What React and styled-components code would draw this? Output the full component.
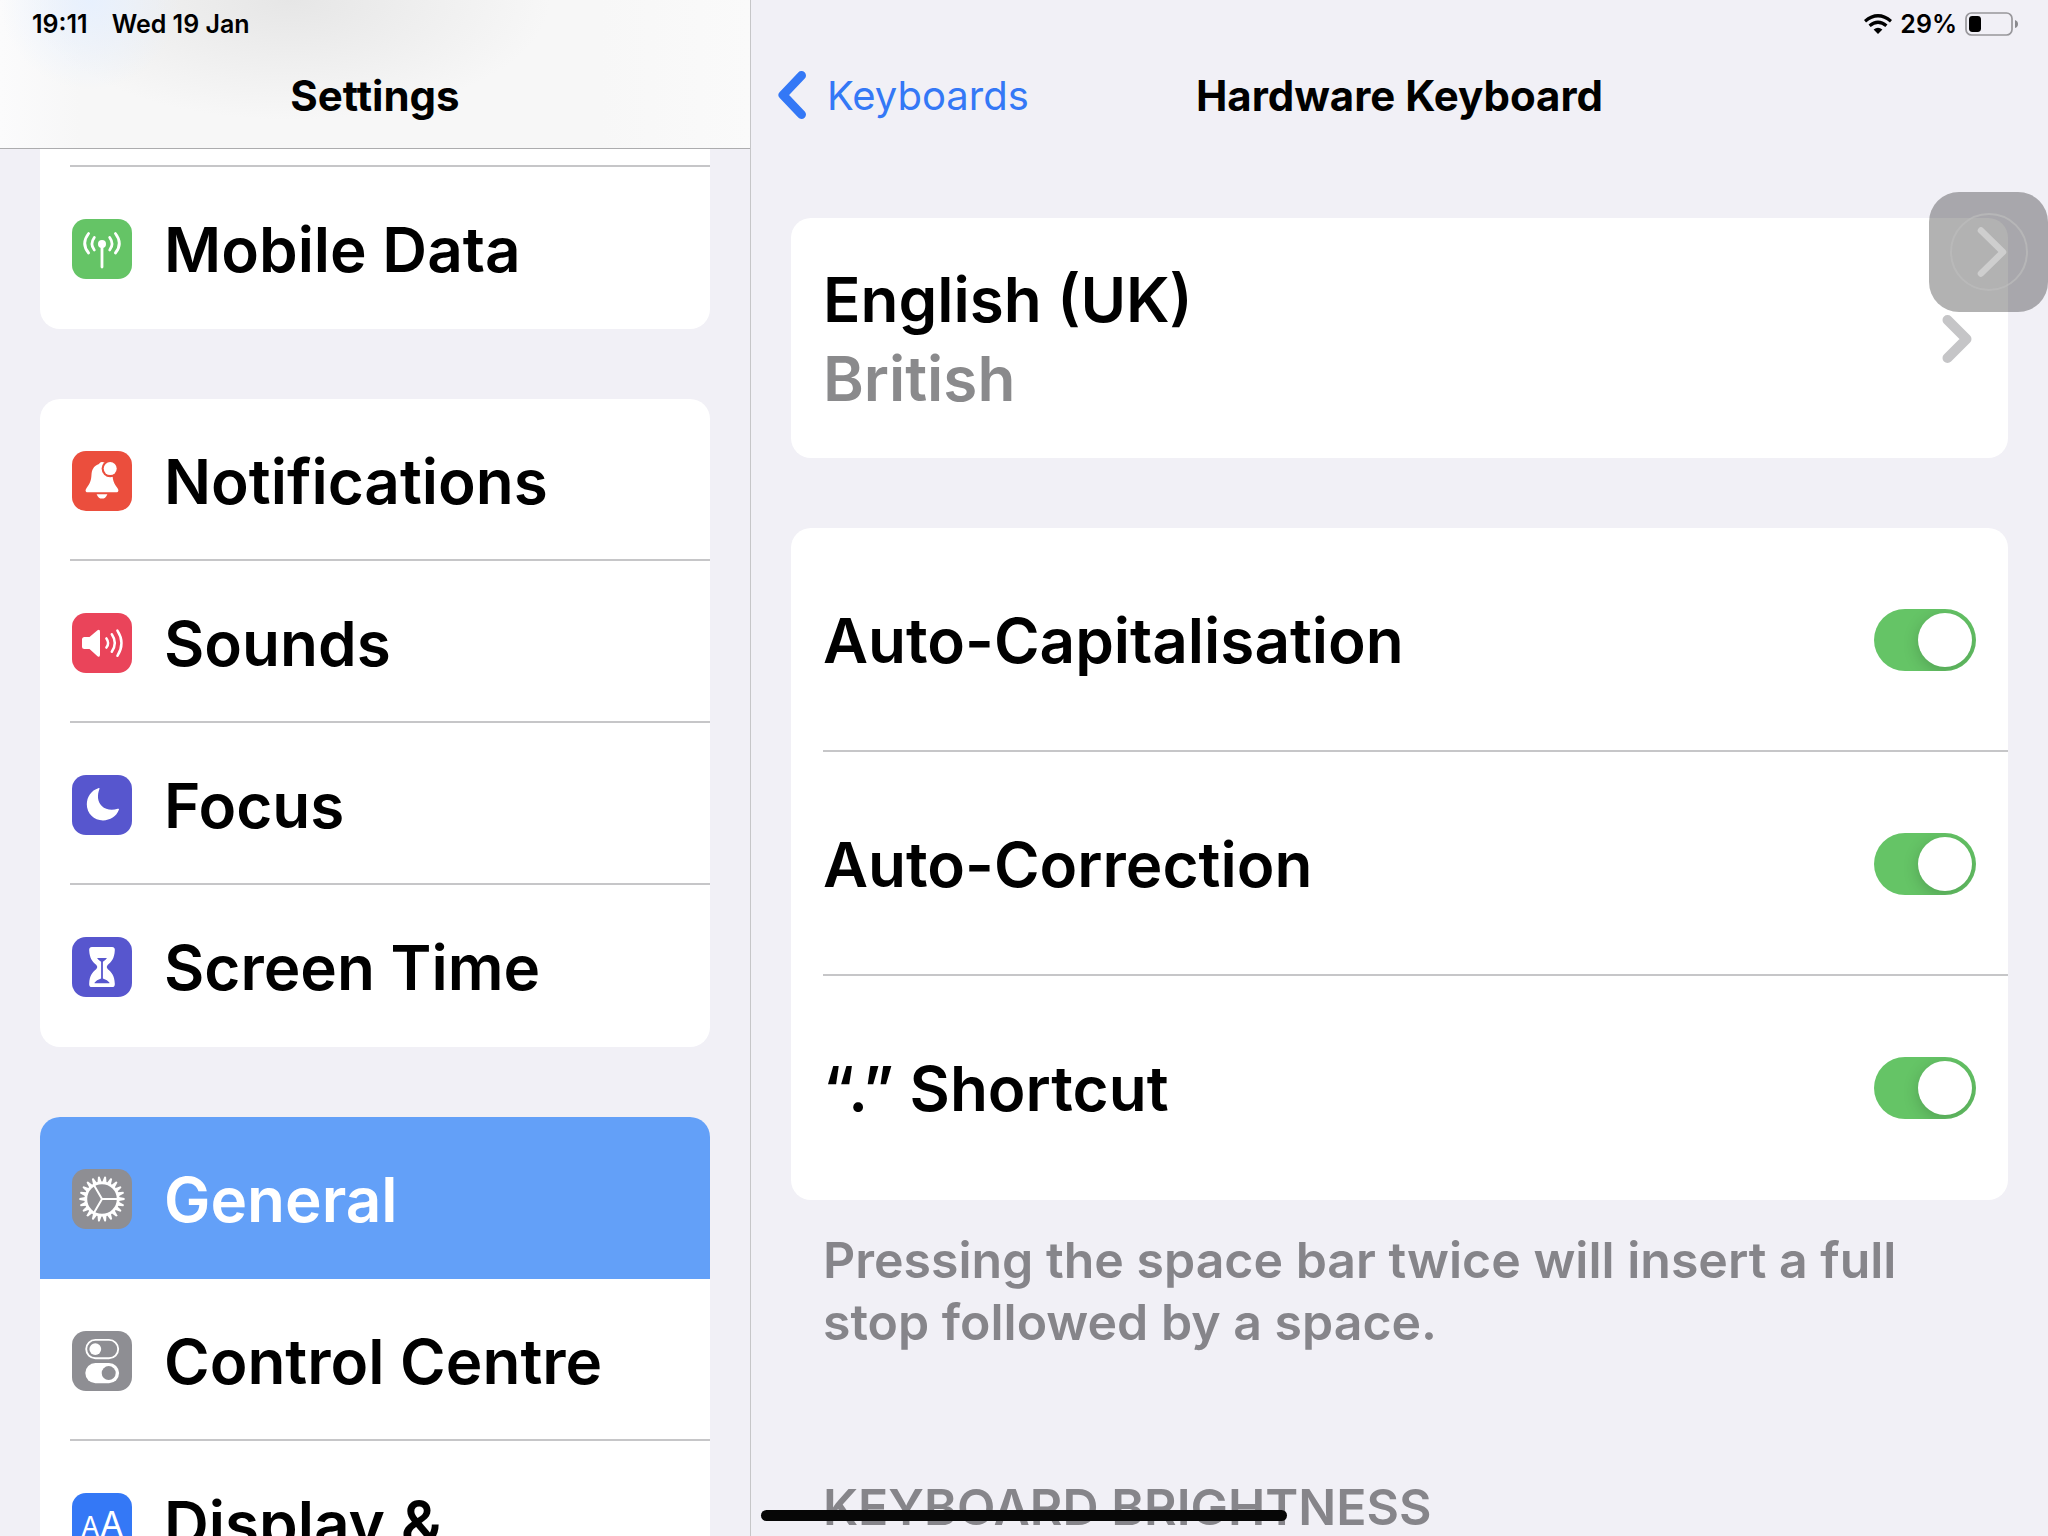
import React, { useState } from 'react'
import styled, { createGlobalStyle, ThemeProvider } from 'styled-components'

const theme = {
  font: '"Inter", "Liberation Sans", sans-serif',
  background: '#f1f0f6',
  card: '#ffffff',
  line: '#c6c6c8',
  text: '#000000',
  muted: '#86858a',
  blue: '#3478f6',
  selected: '#63a0f8',
  green: '#65c466',
}

const GlobalStyle = createGlobalStyle`
  * { box-sizing: border-box; }
  body { margin: 0; overflow: hidden; }
  h1, h2, p, ul { margin: 0; padding: 0; font: inherit; }
  ul { list-style: none; }
  button { border: 0; padding: 0; background: none; font: inherit; color: inherit; cursor: pointer; }
`

const Screen = styled.div`
  position: relative;
  display: grid;
  grid-template-columns: 11fr 19fr;
  height: 100vh;
  overflow: hidden;
  background: ${ ({ theme }) => theme.background };
  color: ${ ({ theme }) => theme.text };
  font-family: ${ ({ theme }) => theme.font };
  font-size: 62px;
  font-weight: 600;
`

const Sidebar = styled.nav`
  min-width: 0;
  overflow: hidden;
  border-right: 1px solid ${ ({ theme }) => theme.line };
`

const SidebarHeader = styled.header`
  height: 149px;
  border-bottom: 1px solid #acacae;
  background:
    radial-gradient(ellipse 90px 90px at 90px 0, rgba(230, 240, 255, 0.9) 0, rgba(230, 240, 255, 0) 100%),
    radial-gradient(ellipse 260px 120px at 290px 0, #e6e6e6 0, rgba(230, 230, 230, 0) 100%),
    linear-gradient(to right, #fbfbfc 0, #f7f7f7 80px, #f7f7f7 600px, #fafafa 100%);
`

const StatusBar = styled.div`
  display: flex;
  align-items: center;
  justify-content: ${ props => props.$end ? 'flex-end' : 'flex-start' };
  gap: ${ props => props.$end ? '8px' : '24px' };
  height: 48px;
  padding: 0 30px 0 32px;
  font-size: 25px;
`

const TitleBar = styled.div`
  display: grid;
  grid-template-columns: 1fr auto 1fr;
  align-items: center;
  height: 94px;
  padding: 0 26px;
  font-size: 40px;
`

const Title = styled.h1`
  grid-column: 2;
  font-size: 42px;
  font-weight: 700;
`

const BackLink = styled.a`
  display: flex;
  align-items: center;
  gap: 20px;
  color: ${ ({ theme }) => theme.blue };
  font-weight: 400;
  text-decoration: none;
`

const SidebarList = styled.div`
  display: flex;
  flex-direction: column;
  gap: 70px;
  padding: 0 40px;
`

const Card = styled.ul`
  overflow: hidden;
  border-radius: ${ props => props.$cut ? '0 0 20px 20px' : '20px' };
  background: ${ ({ theme }) => theme.card };
`

const NavItem = styled.li`
  padding-left: 30px;
  background: ${ ({ theme, $selected }) => $selected ? theme.selected : 'transparent' };
  color: ${ ({ theme, $selected }) => $selected ? theme.card : 'inherit' };
`

const NavButton = styled.button`
  display: flex;
  align-items: center;
  gap: 32px;
  width: 100%;
  height: 162px;
  padding: 2px 0 0 2px;
  text-align: left;
  white-space: nowrap;
  ${ props => props.$line ? `border-bottom: 2px solid ${ props.theme.line }; padding-top: 4px;` : '' }
`

const CutRow = styled.li`
  height: 18px;
  margin-left: 30px;
  border-bottom: 2px solid ${ ({ theme }) => theme.line };
`

const Tile = styled.svg`
  flex: none;
  width: 60px;
  height: 60px;
  border-radius: 14px;
  background: ${ props => props.$color };
`

const Main = styled.main`
  min-width: 0;
  overflow: hidden;
`

const MainHeader = styled.header`
  height: 148px;
`

const Content = styled.div`
  display: flex;
  flex-direction: column;
  gap: 70px;
  padding: 70px 40px 0;
`

const LayoutButton = styled.button`
  display: flex;
  align-items: center;
  justify-content: space-between;
  width: 100%;
  height: 240px;
  padding: 2px 36px 0 32px;
  line-height: 79px;
  text-align: left;
`

const LayoutName = styled.span`
  display: flex;
  flex-direction: column;
`

const Variant = styled.span`
  color: #8a8a8c;
`

const SwitchRow = styled.li`
  display: flex;
  align-items: center;
  justify-content: space-between;
  height: 224px;
  margin-left: 32px;
  padding: 2px 32px 0 0;
  &:last-child { padding-top: 0; }
  &:not(:last-child) { border-bottom: 2px solid ${ ({ theme }) => theme.line }; }
`

const Switch = styled.input`
  appearance: none;
  flex: none;
  display: flex;
  width: 102px;
  height: 62px;
  margin: 0;
  padding: 4px;
  overflow: hidden;
  border-radius: 31px;
  background: #e9e9ea;
  cursor: pointer;
  &::before {
    content: '';
    width: 54px;
    height: 54px;
    border-radius: 50%;
    background: #fff;
    box-shadow: 0 4px 16px rgba(0, 0, 0, 0.18);
  }
  &:checked {
    justify-content: flex-end;
    background: ${ ({ theme }) => theme.green };
  }
`

const Note = styled.p`
  padding: 29px 32px 0;
  color: ${ ({ theme }) => theme.muted };
  font-size: 50px;
  line-height: 62px;
`

const SectionTitle = styled.h2`
  padding: 53px 32px 0;
  color: ${ ({ theme }) => theme.muted };
  font-size: 50px;
  line-height: 62px;
  white-space: nowrap;
`

const AssistiveButton = styled.button`
  position: absolute;
  top: 192px;
  right: 0;
  width: 119px;
  height: 120px;
  border-radius: 30px;
  background: rgba(0, 0, 0, 0.3);
  svg { display: block; }
`

const HomeIndicator = styled.div`
  position: absolute;
  bottom: 15px;
  left: 50%;
  width: 526px;
  height: 11px;
  border-radius: 6px;
  background: #060606;
  transform: translateX(-50%);
`

const stroke = { fill: 'none', stroke: '#fff', strokeLinecap: 'round' }

const AntennaIcon = () => (
  <>
    <g {...stroke} strokeWidth="2.8">
      <path d="M30 26V48" />
      <path d="M22.3 18.5Q17.6 25 22.3 31M37.7 18.5Q42.4 25 37.7 31" />
      <path d="M16.6 14.5Q8.8 24.5 16.6 34M43.4 14.5Q51.2 24.5 43.4 34" />
    </g>
    <circle cx="30" cy="25" r="4" fill="#fff" />
  </>
)

const BellIcon = () => (
  <>
    <path fill="#fff" d="M30 11C28 11 28 12.6 26.5 13.2C21.5 15 19.8 19 19.5 23.5C19.1 30 18.2 32 14.6 37C12.8 39.6 13.6 41.3 15.5 41.3H44.5C46.4 41.3 47.2 39.6 45.4 37C41.8 32 40.9 30 40.5 23.5C40 17 36 11 30 11Z" />
    <path fill="#fff" d="M24.6 43.2H35.4C34 46.4 32.4 47.6 30 47.6C27.6 47.6 26 46.4 24.6 43.2Z" />
    <circle cx="38.2" cy="17.6" r="8.6" fill="#eb4e3d" />
    <circle cx="38.2" cy="17.6" r="6.5" fill="#fff" />
  </>
)

const SpeakerIcon = () => (
  <>
    <path fill="#fff" d="M12.5 24H17.5L25.5 17.3Q28 15.8 28 18.8V41.8Q28 44.8 25.5 43.2L17.5 36H12.5Q10 36 10 33.5V26.5Q10 24 12.5 24Z" />
    <g {...stroke} strokeWidth="2.5">
      <path d="M34.4 25.4Q37.8 30 34.4 34.6" />
      <path d="M39.8 21.3Q45.8 30 39.8 38.8" />
      <path d="M45.4 17.6Q53.6 30 45.4 42.8" />
    </g>
  </>
)

const MoonIcon = () => (
  <path fill="#fff" d="M26.8 13.1C18.8 15.6 14.8 22.4 14.8 29.3C14.8 38.6 22 45.4 31 45.4C38 45.4 44.6 41.4 46.9 34.8C47.2 33.8 46.6 33.5 45.8 33.8C39.8 35.8 33.6 34.8 29.8 31C25.6 26.8 25 20.6 27.4 14C27.7 13.3 27.4 12.9 26.8 13.1Z" />
)

const HourglassIcon = () => (
  <>
    <path fill="#fff" d="M20 10H40Q43.2 10 42.8 13.6C42.4 21.4 39.6 24.8 35.6 28Q33.8 30 35.6 32C39.6 35.2 42.4 38.6 42.8 46.4Q43.2 50 40 50H20Q16.8 50 17.2 46.4C17.6 38.6 20.4 35.2 24.4 32Q26.2 30 24.4 28C20.4 24.8 17.6 21.4 17.2 13.6Q16.8 10 20 10Z" />
    <path fill="#5756ce" d="M25 21H35Q33.4 23.4 30.9 24.8V41.6Q35.6 43 37.4 45.4V46.2H22.6V45.4Q24.4 43 29.1 41.6V24.8Q26.6 23.4 25 21Z" />
  </>
)

const TEETH = 22

const GearIcon = () => (
  <>
    <g fill="#fff">
      {
        Array.from({ length: TEETH }, (_, i) => (
          <path
            key={i}
            d="M46.8 27.9L52.4 29.1Q53.2 30 52.4 30.9L46.8 32.1Z"
            transform={`rotate(${ i * 360 / TEETH } 30 30)`} />
        ))
      }
    </g>
    <circle cx="30" cy="30" r="16.2" fill="none" stroke="#fff" strokeWidth="2.8" />
    <path {...stroke} strokeWidth="2" d="M30 30H46M30 30L22 16.2M30 30L22 43.8" />
  </>
)

const SwitchesIcon = () => (
  <>
    <rect x="14.2" y="8.9" width="32" height="18.4" rx="9.2" fill="none" stroke="#fff" strokeWidth="1.9" />
    <circle cx="23.3" cy="18.1" r="5.9" fill="#fff" />
    <rect x="13.3" y="32" width="33.8" height="20.2" rx="10.1" fill="#fff" />
    <circle cx="36.7" cy="42.1" r="7" fill="#8e8e93" />
  </>
)

const LettersIcon = () => (
  <g fill="#fff" fontWeight="400">
    <text x="9" y="43" fontSize="27">A</text>
    <text x="28" y="43" fontSize="34">A</text>
  </g>
)

const Chevron = ({ left, color, width = 30, thickness = 10 }) => (
  <svg width={width} height="50" viewBox="0 0 30 50" aria-hidden="true">
    <path
      d={left ? 'M24.5 5.5L6 25L24.5 44.5' : 'M5.5 6L24.5 25L5.5 44'}
      fill="none"
      stroke={color}
      strokeWidth={thickness}
      strokeLinecap="round"
      strokeLinejoin="round" />
  </svg>
)

const WifiIcon = () => (
  <svg width="28" height="20" viewBox="0 0 28 20" role="img" aria-label="Wi-Fi">
    <g fill="none" stroke="#000" strokeWidth="3.3">
      <path d="M1 7.2Q14 -3.6 27 7.2" />
      <path d="M5.6 11.8Q14 4.8 22.4 11.8" />
    </g>
    <path d="M9.6 15.6Q14 12 18.4 15.6L14 20Z" />
  </svg>
)

const BatteryIcon = () => (
  <svg width="53" height="24" viewBox="0 0 53 24" role="img" aria-label="Battery">
    <rect x="1" y="1" width="46" height="22" rx="5.5" fill="none" stroke="#98979b" strokeWidth="1.7" />
    <rect x="4" y="4" width="12" height="16" rx="3.4" />
    <path d="M50 8Q53 9 53 12T50 16Z" fill="#8a8a8e" />
  </svg>
)

const groups = [
  {
    cut: true,
    items: [{ name: 'Mobile Data', color: '#65c466', icon: AntennaIcon }],
  },
  {
    items: [
      { name: 'Notifications', color: '#eb4e3d', icon: BellIcon },
      { name: 'Sounds', color: '#ea445a', icon: SpeakerIcon },
      { name: 'Focus', color: '#5756ce', icon: MoonIcon },
      { name: 'Screen Time', color: '#5756ce', icon: HourglassIcon },
    ],
  },
  {
    items: [
      { name: 'General', color: '#8e8e93', icon: GearIcon },
      { name: 'Control Centre', color: '#8e8e93', icon: SwitchesIcon },
      { name: 'Display &', color: '#3478f6', icon: LettersIcon },
    ],
  },
]

const switches = [
  { id: 'auto-capitalisation', label: 'Auto-Capitalisation' },
  { id: 'auto-correction', label: 'Auto-Correction' },
  { id: 'shortcut', label: '“.” Shortcut' },
]

const SettingsNav = () => {
  const [selected, setSelected] = useState('General')

  return (
    <Sidebar>
      <SidebarHeader>
        <StatusBar>
          <span>19:11</span>
          <span>Wed 19 Jan</span>
        </StatusBar>
        <TitleBar>
          <Title>Settings</Title>
        </TitleBar>
      </SidebarHeader>
      <SidebarList>
        {
          groups.map(({ cut, items }) => (
            <Card key={items[0].name} $cut={cut}>
              { cut && <CutRow /> }
              {
                items.map(({ name, color, icon: Icon }, i) => (
                  <NavItem key={name} $selected={name === selected}>
                    <NavButton
                      type="button"
                      $line={i < items.length - 1 && name !== selected}
                      onClick={() => setSelected(name)}>
                      <Tile viewBox="0 0 60 60" $color={color} aria-hidden="true">
                        <Icon />
                      </Tile>
                      { name }
                    </NavButton>
                  </NavItem>
                ))
              }
            </Card>
          ))
        }
      </SidebarList>
    </Sidebar>
  )
}

const HardwareKeyboard = () => {
  const [on, setOn] = useState({
    'auto-capitalisation': true,
    'auto-correction': true,
    'shortcut': true,
  })

  const toggle = id => setOn({ ...on, [id]: !on[id] })

  return (
    <Main>
      <MainHeader>
        <StatusBar $end>
          <WifiIcon />
          <span>29%</span>
          <BatteryIcon />
        </StatusBar>
        <TitleBar>
          <BackLink href="#keyboards">
            <Chevron left color="#3478f6" thickness={9} />
            Keyboards
          </BackLink>
          <Title>Hardware Keyboard</Title>
        </TitleBar>
      </MainHeader>
      <Content>
        <Card>
          <li>
            <LayoutButton type="button">
              <LayoutName>
                <span>English (UK)</span>
                <Variant>British</Variant>
              </LayoutName>
              <Chevron color="#c5c5c7" />
            </LayoutButton>
          </li>
        </Card>
        <section>
          <Card>
            {
              switches.map(({ id, label }) => (
                <SwitchRow key={id}>
                  <label htmlFor={id}>{ label }</label>
                  <Switch
                    id={id}
                    type="checkbox"
                    role="switch"
                    checked={on[id]}
                    onChange={() => toggle(id)} />
                </SwitchRow>
              ))
            }
          </Card>
          <Note>Pressing the space bar twice will insert a full stop followed by a space.</Note>
        </section>
        <SectionTitle>KEYBOARD BRIGHTNESS</SectionTitle>
      </Content>
    </Main>
  )
}

const App = () => (
  <ThemeProvider theme={theme}>
    <GlobalStyle />
    <Screen>
      <SettingsNav />
      <HardwareKeyboard />
      <AssistiveButton type="button" aria-label="AssistiveTouch">
        <svg width="119" height="120" viewBox="0 0 119 120">
          <circle cx="60" cy="60" r="38" fill="none" stroke="#bcbcbc" strokeOpacity="0.7" strokeWidth="2" />
          <path d="M52 38.5L74 60L52 81.5" fill="none" stroke="#cecece" strokeWidth="6.5" strokeLinecap="round" strokeLinejoin="round" />
        </svg>
      </AssistiveButton>
      <HomeIndicator />
    </Screen>
  </ThemeProvider>
)

export default App
